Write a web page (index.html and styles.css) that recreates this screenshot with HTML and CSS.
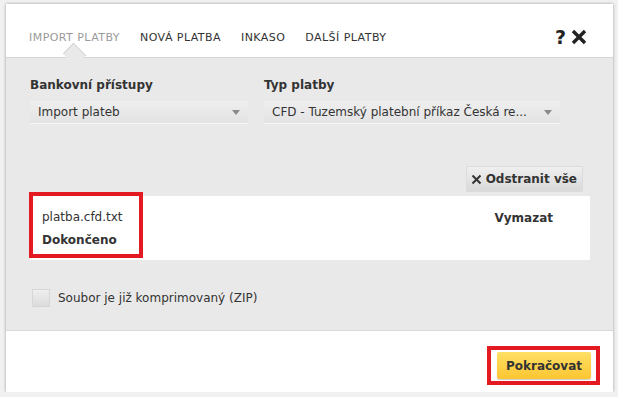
FILE: index.html
```html
<!DOCTYPE html>
<html lang="cs">
<head>
    <meta charset="UTF-8">
    <meta name="viewport" content="width=device-width, initial-scale=1.0">
    <title>Import plateb</title>
    <link rel="stylesheet" href="styles.css">
</head>
<body>
    <div class="dialog">
        <div class="dialog-head">
            <nav class="tabs">
                <a class="tab active" href="#">IMPORT PLATBY</a>
                <a class="tab" href="#">NOVÁ PLATBA</a>
                <a class="tab" href="#">INKASO</a>
                <a class="tab" href="#">DALŠÍ PLATBY</a>
            </nav>
            <div class="head-icons">
                <span class="help">?</span>
                <svg class="close" width="16" height="16" viewBox="0 0 16 16">
                    <path d="M2 2 L14 14 M14 2 L2 14" stroke="#222" stroke-width="3.4" />
                </svg>
            </div>
        </div>

        <div class="dialog-body">
            <div class="fields">
                <div class="field">
                    <label>Bankovní přístupy</label>
                    <div class="select">
                        <span>Import plateb</span>
                        <span class="arrow"></span>
                    </div>
                </div>
                <div class="field">
                    <label>Typ platby</label>
                    <div class="select">
                        <span>CFD - Tuzemský platební příkaz Česká re...</span>
                        <span class="arrow"></span>
                    </div>
                </div>
            </div>

            <div class="toolbar">
                <button class="btn-grey" type="button">
                    <svg width="11" height="11" viewBox="0 0 11 11">
                        <path d="M1.5 1.5 L9.5 9.5 M9.5 1.5 L1.5 9.5" stroke="#333" stroke-width="2" />
                    </svg>
                    Odstranit vše
                </button>
            </div>

            <div class="file-row">
                <div class="file-info">
                    <div class="file-name">platba.cfd.txt</div>
                    <div class="file-state">Dokončeno</div>
                </div>
                <a class="file-remove" href="#">Vymazat</a>
            </div>

            <label class="check">
                <span class="box"></span>
                Soubor je již komprimovaný (ZIP)
            </label>
        </div>

        <div class="dialog-foot">
            <span class="mark">
                <button class="btn-yellow" type="button">Pokračovat</button>
            </span>
        </div>
    </div>
</body>
</html>
```

FILE: styles.css
```css
body {
    margin: 0;
    background-color: #f1f1f1;
    font-family: "DejaVu Sans", Verdana, sans-serif;
    font-size: 12px;
    color: #333;
}

.dialog {
    width: 607px;
    height: 388px;
    margin: 4px 0 0 6px;
    background: #ffffff;
    box-shadow: 0 0 3px rgba(0, 0, 0, 0.35);
    display: flex;
    flex-direction: column;
}

.dialog-head {
    flex: none;
    height: 53px;
    border-bottom: 1px solid #d6d6d6;
    display: flex;
    align-items: center;
    justify-content: space-between;
    padding: 0 26px 0 23px;
}

.tabs {
    display: flex;
    gap: 20px;
    margin-top: 13px;
}

.tab {
    position: relative;
    font-size: 11px;
    color: #333;
    text-decoration: none;
    letter-spacing: 0.45px;
}

.tab.active {
    color: #9a9a9a;
}

.tab.active::after {
    content: "";
    position: absolute;
    left: 38px;
    top: 16px;
    width: 14px;
    height: 14px;
    background: #e9e9e9;
    border-left: 1px solid #d6d6d6;
    border-top: 1px solid #d6d6d6;
    transform: rotate(45deg) scaleX(1.2);
}

.head-icons {
    display: flex;
    align-items: center;
    gap: 5px;
    margin-top: 12px;
}

.help {
    font-size: 19px;
    font-weight: bold;
    color: #222;
    line-height: 16px;
}

.dialog-body {
    flex: none;
    height: 236px;
    background: #e9e9e9;
    border-bottom: 1px solid #d9d9d9;
    padding: 20px 23px 16px 24px;
    position: relative;
}

.fields {
    display: grid;
    grid-template-columns: 218px 296px;
    gap: 16px;
}

.field label {
    display: block;
    font-weight: bold;
    font-size: 12px;
    color: #333;
    margin-bottom: 9px;
}

.select {
    height: 22px;
    background: linear-gradient(#eeeeee, #e3e3e3);
    display: flex;
    align-items: center;
    justify-content: space-between;
    padding: 0 8px 0 8px;
    font-size: 12px;
    color: #333;
    box-shadow: 0 1px 0 #f6f6f6;
}

.arrow {
    width: 0;
    height: 0;
    border-left: 4px solid transparent;
    border-right: 4px solid transparent;
    border-top: 5px solid #8a8a8a;
}

.toolbar {
    display: flex;
    justify-content: flex-end;
    margin-top: 43px;
    padding-right: 7px;
}

.btn-grey {
    height: 26px;
    padding: 0 6px 0 5px;
    border: none;
    background: linear-gradient(#f0f0f0, #d8d8d8);
    box-shadow: inset 0 0 0 1px #dcdcdc;
    font-family: inherit;
    font-size: 12px;
    font-weight: bold;
    color: #333;
    display: flex;
    align-items: center;
    gap: 4px;
}

.file-row {
    margin-top: 4px;
    height: 64px;
    width: 560px;
    background: #ffffff;
    display: flex;
    justify-content: space-between;
    align-items: flex-start;
}

.file-info {
    margin: 0 0 6px 3px;
    padding: 14px 5px 4px 9px;
    width: 92px;
    outline: 4px solid #e31a22;
    align-self: stretch;
}

.file-name {
    font-size: 12px;
    color: #333;
}

.file-state {
    font-weight: bold;
    margin-top: 9px;
}

.file-remove {
    font-weight: bold;
    color: #333;
    text-decoration: none;
    margin: 15px 37px 0 0;
}

.check {
    display: flex;
    align-items: center;
    gap: 8px;
    margin-top: 29px;
    margin-left: 2px;
    color: #333;
}

.box {
    width: 18px;
    height: 18px;
    background: linear-gradient(#f0f0f0, #dadada);
    box-shadow: inset 0 0 0 1px #d6d6d6;
}

.dialog-foot {
    flex: 1;
    display: flex;
    justify-content: flex-end;
    align-items: flex-start;
    padding: 15px 13px 0 0;
}

.mark {
    border: 4px solid #e31a22;
    padding: 2px 5px 2px 6px;
    display: flex;
}

.btn-yellow {
    width: 94px;
    height: 27px;
    border: none;
    border-radius: 2px;
    background: linear-gradient(#ffe066, #fcc531);
    box-shadow: 0 1px 1px rgba(0, 0, 0, 0.2);
    font-family: inherit;
    font-size: 12px;
    font-weight: bold;
    color: #333;
}
```
